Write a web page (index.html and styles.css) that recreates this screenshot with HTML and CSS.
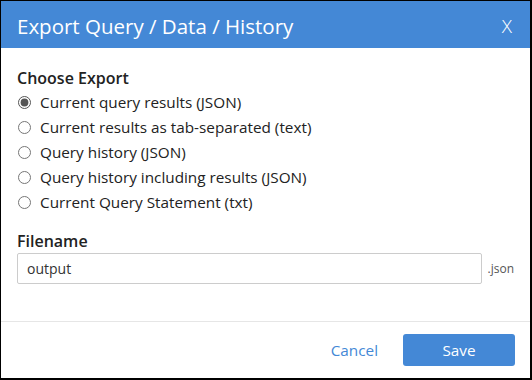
FILE: index.html
```html
<!DOCTYPE html>
<html>
  <head>
    <link rel="stylesheet" href="styles.css">
  </head>
  <body>
    <div class="dialog">
      <div class="dialog-header">
        <span class="title">Export Query / Data / History</span>
        <span class="close">X</span>
      </div>
      <div class="dialog-body">
        <div class="section-label">Choose Export</div>
        <label class="option"><input type="radio" name="exp" checked> Current query results (JSON)</label>
        <label class="option"><input type="radio" name="exp"> Current results as tab-separated (text)</label>
        <label class="option"><input type="radio" name="exp"> Query history (JSON)</label>
        <label class="option"><input type="radio" name="exp"> Query history including results (JSON)</label>
        <label class="option"><input type="radio" name="exp"> Current Query Statement (txt)</label>
        <div class="section-label filename-label">Filename</div>
        <div class="filename-row">
          <input type="text" class="filename" value="output">
          <span class="ext">.json</span>
        </div>
      </div>
      <div class="dialog-footer">
        <button class="cancel">Cancel</button>
        <button class="save">Save</button>
      </div>
    </div>
  </body>
</html>
```
FILE: styles.css
```css
body {
  margin: 0;
  font-family: "Open Sans", "Noto Sans", sans-serif;
  color: #222;
}

.dialog {
  width: 532px;
  height: 380px;
  box-sizing: border-box;
  border: 1px solid #000;
  border-right-width: 2px;
  border-bottom-width: 2px;
  display: flex;
  flex-direction: column;
  background: #fff;
}

.dialog-header {
  height: 47px;
  box-sizing: border-box;
  background: #4488d6;
  color: #fff;
  display: flex;
  align-items: center;
  justify-content: space-between;
  padding: 2px 18px 0 16px;
}
.title {
  font-size: 20.5px;
}
.close {
  font-size: 19px;
  font-weight: 300;
}

.dialog-body {
  flex: 1;
  padding: 19px 16px 0 16px;
  display: flex;
  flex-direction: column;
}
.section-label {
  font-size: 16px;
  font-weight: 600;
  line-height: 22px;
  margin-bottom: 1px;
}
.option {
  display: flex;
  align-items: center;
  font-size: 15.3px;
  line-height: 25px;
  height: 25px;
}
.option input {
  margin: 0 9px 0 1px;
  width: 13px;
  height: 13px;
  accent-color: #555;
}
.filename-label {
  margin-top: 15px;
}
.filename-row {
  display: flex;
  align-items: center;
}
.filename {
  width: 465px;
  height: 31px;
  box-sizing: border-box;
  border: 1px solid #ccc;
  border-radius: 2px;
  padding: 0 9px;
  font-family: inherit;
  font-size: 14px;
  color: #333;
}
.ext {
  margin-left: 6px;
  font-size: 12px;
  color: #555;
}

.dialog-footer {
  border-top: 1px solid #e6e6e6;
  height: 56px;
  display: flex;
  align-items: center;
  justify-content: flex-end;
  padding-right: 15px;
  gap: 25px;
}
.dialog-footer button {
  font-family: inherit;
  font-size: 15.3px;
  border: none;
  cursor: pointer;
  padding: 0;
}
.cancel {
  background: none;
  color: #4488d6;
}
.save {
  background: #4488d6;
  color: #fff;
  width: 112px;
  height: 32px;
  border-radius: 3px;
}
```
